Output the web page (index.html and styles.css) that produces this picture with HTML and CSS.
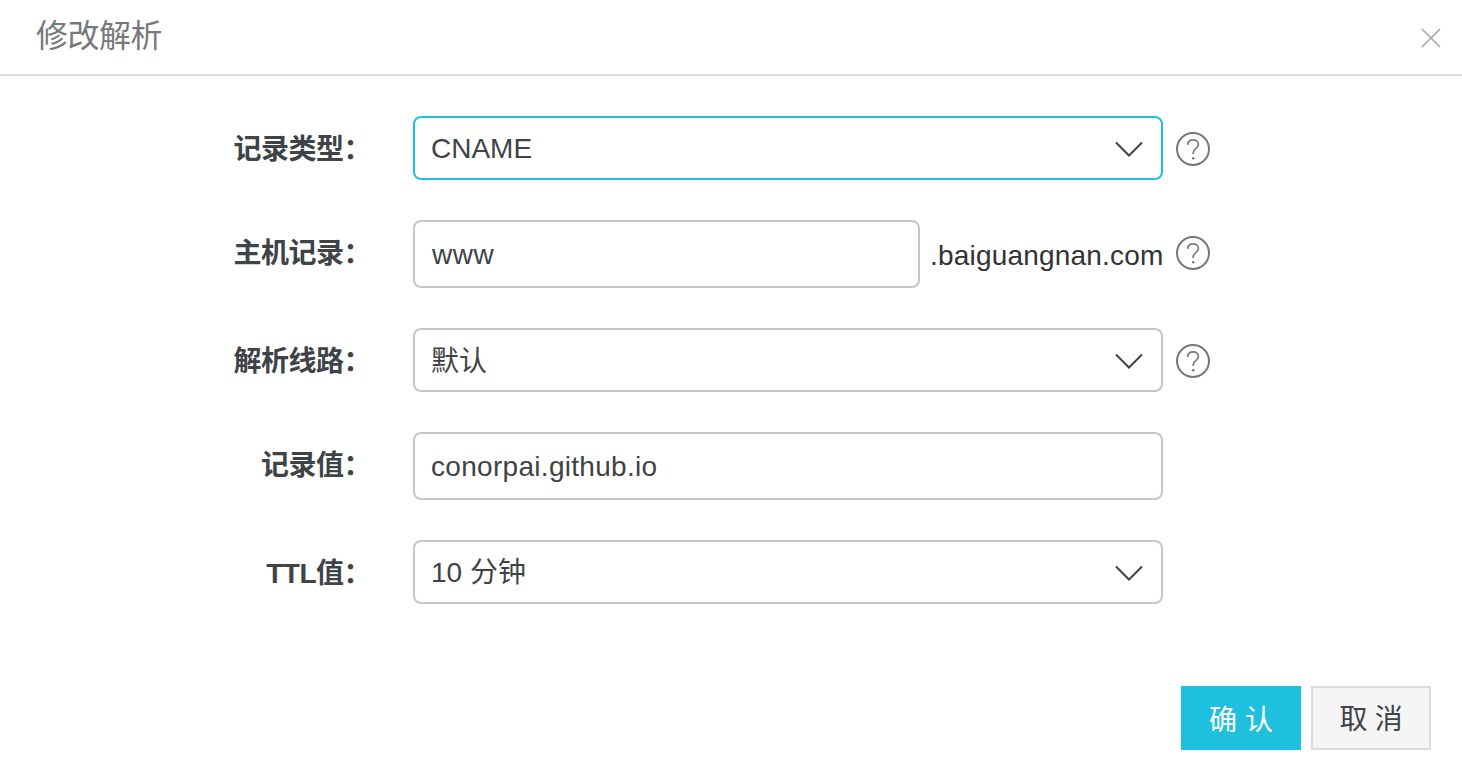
FILE: index.html
```html
<!DOCTYPE html>
<html lang="zh-CN">
<head>
<meta charset="utf-8">
<title>修改解析</title>
<link rel="stylesheet" href="styles.css">
</head>
<body>
<svg class="defs" width="0" height="0" aria-hidden="true">
  <symbol id="help" viewBox="0 0 34 34">
    <circle cx="17" cy="17" r="16" fill="none" stroke="#76797c" stroke-width="2"/>
    <path d="M11.6 12.8c.3-3.2 2.5-5 5.5-5 3.100 0 5.300 1.900 5.300 4.500 0 2-1 3.100-2.700 4.300-1.700 1.200-2.500 2.200-2.500 4.300v1.100" fill="none" stroke="#76797c" stroke-width="1.700"/>
    <circle cx="17.200" cy="26.200" r="1.300" fill="#76797c"/>
  </symbol>
  <symbol id="chev" viewBox="0 0 28 16">
    <path d="M1 1.500 14 14.500 27 1.500" fill="none" stroke="#3e4347" stroke-width="2"/>
  </symbol>
</svg>
<main class="dialog">
  <header class="head">
    <h1 class="title">修改解析</h1>
    <svg class="close" viewBox="0 0 20 20" aria-label="关闭"><path d="M1 1 19 19M19 1 1 19" fill="none" stroke="#a3a5a7" stroke-width="1.600"/></svg>
  </header>
  <form class="form">
    <div class="row">
      <label class="label">记录类型：</label>
      <div class="field wide select active"><span class="latin">CNAME</span><svg class="chev"><use href="#chev"/></svg></div>
      <svg class="help"><use href="#help"/></svg>
    </div>
    <div class="row row-tall">
      <label class="label">主机记录：</label>
      <div class="field short tall"><span class="latin host">www</span></div>
      <span class="suffix">.baiguangnan.com</span>
      <svg class="help"><use href="#help"/></svg>
    </div>
    <div class="row">
      <label class="label">解析线路：</label>
      <div class="field wide select"><span class="cjk">默认</span><svg class="chev"><use href="#chev"/></svg></div>
      <svg class="help"><use href="#help"/></svg>
    </div>
    <div class="row row-tall">
      <label class="label">记录值：</label>
      <div class="field wide tall"><span class="latin spaced">conorpai.github.io</span></div>
    </div>
    <div class="row">
      <label class="label">TTL值：</label>
      <div class="field wide select"><span class="mixed">10 分钟</span><svg class="chev"><use href="#chev"/></svg></div>
    </div>
  </form>
  <footer class="foot">
    <button class="btn primary" type="button">确 认</button>
    <button class="btn plain" type="button">取 消</button>
  </footer>
</main>
</body>
</html>
```
FILE: styles.css
```css
* { box-sizing: border-box; }
html, body { margin: 0; height: 100%; background: #fff; overflow: hidden; }
body {
  font-family: "Liberation Sans", "Noto Sans CJK SC", sans-serif;
  color: #3e4347;
  font-size: 28px;
}
.defs { position: absolute; }
.head {
  height: 76px;
  border-bottom: 2px solid #dcdcdc;
  padding: 0 21px 0 36px;
  display: flex;
  align-items: center;
  justify-content: space-between;
}
.title {
  margin: 0 0 2px;
  font-size: 32px;
  font-weight: 400;
  color: #76797c;
  letter-spacing: -0.5px;
  line-height: 1;
}
.close { width: 20px; height: 20px; margin-top: 2px; }
.form {
  padding-top: 40px;
  display: flex;
  flex-direction: column;
  gap: 40px;
}
.row { display: flex; align-items: center; }
.label {
  width: 371px;
  margin-right: 42px;
  padding-bottom: 2px;
  font-weight: 700;
  text-align: right;
  white-space: nowrap;
  letter-spacing: -0.5px;
}
.row-tall .label { padding-bottom: 6px; }
.field {
  height: 64px;
  border: 2px solid #c6c6c6;
  border-radius: 8px;
  padding: 0 16px;
  display: flex;
  align-items: center;
  justify-content: space-between;
  background: #fff;
}
.tall { height: 68px; }
.wide { width: 750px; }
.short { width: 507px; }
.active { border-color: #1fc0de; }
.latin { padding-top: 2px; }
.host { margin-left: 1px; letter-spacing: 0.5px; }
.spaced { letter-spacing: 0.3px; }
.cjk { padding-bottom: 2px; }
.mixed { padding-bottom: 4px; }
.chev { width: 28px; height: 16px; margin: 2px 2px 0 0; }
.suffix {
  margin-left: 10px;
  width: 233px;
  padding-top: 4px;
  white-space: nowrap;
  letter-spacing: 0.2px;
  color: #333;
}
.help { width: 34px; height: 34px; margin: 2px 0 0 13px; }
.row-tall .help { margin: 0 0 2px 13px; }
.foot {
  margin-top: 82px;
  padding-right: 31px;
  display: flex;
  justify-content: flex-end;
  gap: 10px;
}
.btn {
  width: 120px;
  height: 64px;
  border: 2px solid #dcdcdc;
  border-radius: 0;
  background: #f5f5f5;
  color: #3e4347;
  font: inherit;
  padding: 0;
}
.plain { padding-bottom: 2px; letter-spacing: -0.3px; }
.primary { background: #1fc0de; border-color: #1fc0de; color: #fff; }
```
